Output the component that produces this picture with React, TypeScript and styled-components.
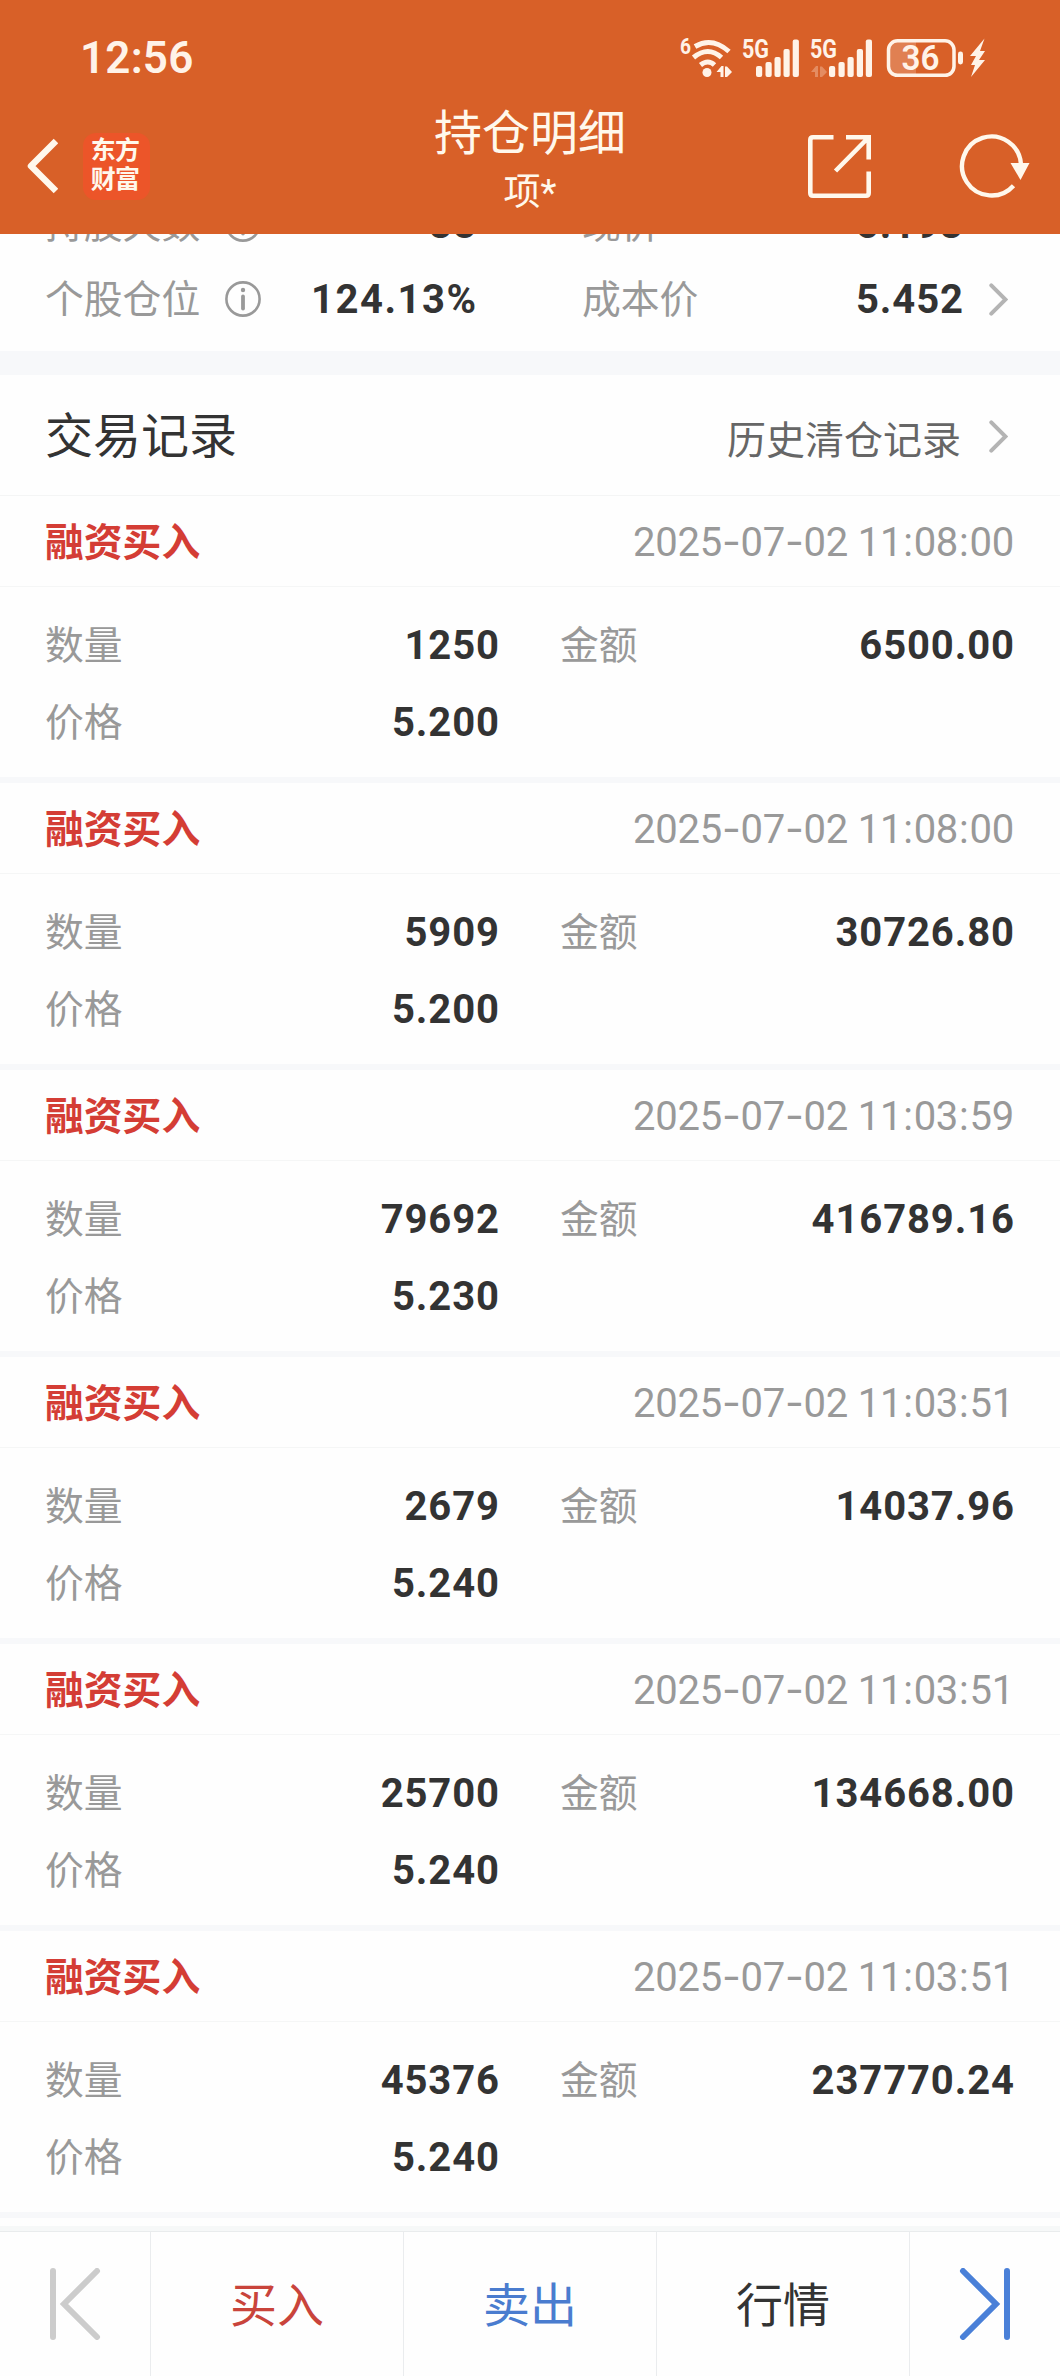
import React from "react";
import styled, { createGlobalStyle } from "styled-components";

const CJK = `Roboto, "Noto Sans CJK SC", sans-serif`;

const Global = createGlobalStyle`
  html, body { margin: 0; padding: 0; background: #fefefe; }
  * { box-sizing: border-box; }
`;

const Screen = styled.div`
  width: 1060px;
  height: 2376px;
  display: flex;
  flex-direction: column;
  overflow: hidden;
  background: #fefefe;
  font-family: ${CJK};
  color: #333;
`;

const Header = styled.header`
  flex: none;
  height: 234px;
  background: #d86028;
  color: #fff8ec;
  display: flex;
  flex-direction: column;
`;

const StatusBar = styled.div`
  height: 100px;
  padding: 16px 70px 0 80px;
  display: flex;
  align-items: center;
  justify-content: space-between;
`;

const Clock = styled.span`
  font-size: 44px;
  font-weight: 600;
  letter-spacing: 0.2px;
  line-height: 60px;
  color: #fff3e8;
`;

const NavBar = styled.div`
  height: 134px;
  display: grid;
  grid-template-columns: 400px 260px 400px;
`;

const NavLeft = styled.div`
  display: flex;
  align-items: center;
  padding: 0 0 2px 26px;
  gap: 25px;
`;

const Logo = styled.div`
  width: 67px;
  height: 67px;
  border-radius: 13px;
  background: #ec5529;
  display: flex;
  flex-direction: column;
  align-items: center;
  justify-content: center;
  padding: 0 3px 2px 0;
  font-size: 25px;
  font-weight: 700;
  line-height: 29px;
  letter-spacing: -0.8px;
`;

const NavTitle = styled.div`
  display: flex;
  flex-direction: column;
  align-items: center;
`;

const Title = styled.div`
  font-size: 48px;
  line-height: 60px;
  margin-top: 4px;
  white-space: nowrap;
`;

const Subtitle = styled.div`
  font-size: 37px;
  line-height: 50px;
  margin-top: 4px;
`;

const NavRight = styled.div`
  display: flex;
  align-items: center;
  justify-content: flex-end;
  gap: 87px;
  padding: 0 29px 2px 0;
`;

const Content = styled.main`
  flex: 1;
  min-height: 0;
  overflow: hidden;
`;

const Summary = styled.section`
  height: 117px;
  overflow: hidden;
  display: flex;
  flex-direction: column;
  justify-content: flex-end;
  padding-bottom: 14px;
`;

const SummaryRow = styled.div`
  flex: none;
  height: 75px;
  padding: 0 46px 0 45px;
  display: grid;
  grid-template-columns: 431px 106px 381px 1fr;
  align-items: center;
`;

const LabelGroup = styled.div`
  display: flex;
  align-items: center;
  gap: 25px;

  svg { margin-bottom: 2px; }
`;

const Label = styled.span`
  font-size: 38.8px;
  line-height: 56px;
  color: #999;
  white-space: nowrap;
`;

const Value = styled.span<{ $tracking?: number }>`
  font-size: 40px;
  line-height: 56px;
  font-weight: 700;
  letter-spacing: ${(p) => p.$tracking ?? 0.9}px;
  margin-right: -${(p) => p.$tracking ?? 0.9}px;
  color: #333;
  text-align: right;
`;

const Between = styled.div`
  display: flex;
  align-items: center;
  justify-content: space-between;
`;

const CostCell = styled(Between)`
  grid-column: 3 / 4;
`;

const ArrowCell = styled.div`
  display: flex;
  justify-content: flex-end;
  padding: 0 6px 0 0;
`;

const Gap = styled.div`
  height: 24px;
  background: #f7f8fa;
`;

const SectionHead = styled.div`
  height: 121px;
  border-bottom: 1px solid #f4f5f5;
  padding: 3px 52px 0 45px;
  display: flex;
  align-items: center;
  justify-content: space-between;
`;

const SectionTitle = styled.h2`
  margin: 0;
  font-size: 48px;
  font-weight: 400;
  line-height: 70px;
`;

const HistoryLink = styled.div`
  display: flex;
  align-items: center;
  gap: 28px;
  font-size: 39px;
  color: #666;
`;

const Record = styled.article`
  height: 287px;
  border-bottom: 6px solid #f7f8fa;
`;

const RecordHead = styled(Between)`
  height: 91px;
  padding: 0 46px 0 45px;
  border-bottom: 1px solid #f5f6f6;
`;

const Kind = styled.span`
  font-size: 38.8px;
  font-weight: 700;
  color: #d43d35;
  padding-bottom: 4px;
`;

const Stamp = styled.time`
  font-size: 40px;
  letter-spacing: -0.25px;
  color: #999;
  white-space: pre;
`;

const Sep = styled.span<{ $dash?: boolean }>`
  ${(p) => (p.$dash ? 'font-family: Inter, sans-serif; font-size: 41px;' : "padding: 0 1px;")}
`;

const RecordBody = styled.div`
  padding: 20px 46px 0 45px;
  display: grid;
  grid-template-columns: 454px 454px;
  column-gap: 61px;
  grid-auto-rows: 77px;
`;

const Foot = styled.div`
  flex: none;
  height: 150px;
  border-top: 5px solid #f6f8f8;
`;

const TabBar = styled.nav`
  height: 145px;
  border-top: 1px solid #e9eced;
  display: grid;
  grid-template-columns: 151px 253px 253px 253px 150px;
`;

const Tab = styled.div<{ $color?: string; $text?: boolean }>`
  display: flex;
  align-items: center;
  justify-content: center;
  font-size: 47px;
  padding-bottom: ${(p) => (p.$text ? "6px" : "0")};
  color: ${(p) => p.$color || "#333"};
  border-right: 1px solid #eaecee;
  &:last-child { border-right: 0; }
`;

const Chevron = () => (
  <svg width="19" height="33" viewBox="0 0 19 33" fill="none" stroke="#b4b4b4" strokeWidth="4" strokeLinecap="round">
    <path d="M2.3 2.3 16.5 16.5 2.3 30.7" />
  </svg>
);

const Info = () => (
  <svg width="36" height="36" viewBox="0 0 36 36" fill="none" stroke="#999" strokeWidth="2.6">
    <circle cx="18" cy="18" r="16.6" />
    <path d="M18 15.500v12" strokeWidth="3.8" strokeLinecap="round" />
    <circle cx="18" cy="9" r="2.2" fill="#999" stroke="none" />
  </svg>
);

const StatusIcons = () => (
  <svg width="310" height="44" viewBox="0 0 310 44" fill="none" stroke="#fff3e8" fontFamily="Roboto, sans-serif">
    <g fill="#fff3e8" stroke="none">
      <text x="0" y="17.500" fontSize="22" fontWeight="700" textLength="11" lengthAdjust="spacingAndGlyphs">6</text>
      <text x="62" y="21.500" fontSize="25" fontWeight="700" textLength="27" lengthAdjust="spacingAndGlyphs">5G</text>
      <text x="130" y="21.500" fontSize="25" fontWeight="700" textLength="27" lengthAdjust="spacingAndGlyphs">5G</text>
      <circle cx="27" cy="36.500" r="4.5" />
      <path d="M36.500 36l5-6h2v11h-3v-5zM45 30.500h2l5 5.500-5 5h-2z" />
      {[[76, 11], [85.5, 15], [94.5, 20], [103.5, 28], [112.7, 37.5]].map(([x, h]) => (
        <rect key={x} x={x} y={41 - h} width="6.2" height={h} rx="2" />
      ))}
      {[[149, 11], [158.5, 15], [167.5, 20], [176.8, 28], [185.8, 37.5]].map(([x, h]) => (
        <rect key={x} x={x} y={41 - h} width="6.2" height={h} rx="2" />
      ))}
      <path d="M131 36l5-6h2v11h-3v-5zM140 30.500h2l5 5.500-5 5h-2z" opacity=".3" />
      <path d="M213 6h23v33h-23q-6-1-6-8V14q0-7 6-8z" opacity=".22" />
      <rect x="278" y="15.500" width="5" height="13" rx="2.400" />
      <path d="M304.500 2.500 290 20h6l-5 9h4l-4 12 14-17h-6l6-9h-5z" />
      <text x="221.500" y="34" fontSize="34.500" fontWeight="600" textLength="38" lengthAdjust="spacingAndGlyphs">36</text>
    </g>
    <path d="M15 10.500q17-10 34 5M13.500 21.500q14.500-12 28 0M20.500 29q7.500-6 14 0" strokeWidth="5" />
    <rect x="208.500" y="4.800" width="65.500" height="34.500" rx="9" strokeWidth="3.500" />
  </svg>
);

const records = [
  ["2025-07-02 11:08:00", "1250", "6500.00", "5.200"],
  ["2025-07-02 11:08:00", "5909", "30726.80", "5.200"],
  ["2025-07-02 11:03:59", "79692", "416789.16", "5.230"],
  ["2025-07-02 11:03:51", "2679", "14037.96", "5.240"],
  ["2025-07-02 11:03:51", "25700", "134668.00", "5.240"],
  ["2025-07-02 11:03:51", "45376", "237770.24", "5.240"],
];

const DateText = ({ value }: { value: string }) => (
  <Stamp>
    {value.split(/([-:])/).map((part, i) =>
      part === "-" || part === ":" ? <Sep key={i} $dash={part === "-"}>{part}</Sep> : part
    )}
  </Stamp>
);

const Field = ({ label, value }: { label: string; value: string }) => (
  <Between>
    <Label>{label}</Label>
    <Value>{value}</Value>
  </Between>
);

type SummaryLineProps = {
  left: string;
  leftValue: string;
  right: string;
  rightValue: string;
  tracking?: number;
  arrow?: boolean;
};

const SummaryLine = ({ left, leftValue, right, rightValue, tracking, arrow }: SummaryLineProps) => (
  <SummaryRow>
    <Between>
      <LabelGroup>
        <Label>{left}</Label>
        <Info />
      </LabelGroup>
      <Value $tracking={tracking}>{leftValue}</Value>
    </Between>
    <CostCell>
      <Label>{right}</Label>
      <Value>{rightValue}</Value>
    </CostCell>
    <ArrowCell>{arrow && <Chevron />}</ArrowCell>
  </SummaryRow>
);

export default function App() {
  return (
    <>
      <Global />
      <Screen>
        <Header>
          <StatusBar>
            <Clock>12:56</Clock>
            <StatusIcons />
          </StatusBar>
          <NavBar>
            <NavLeft>
              <svg width="32" height="56" viewBox="0 0 32 56" fill="none" stroke="#fff8ec" strokeWidth="6.500">
                <path d="M30 3 5 28l25 25" strokeLinejoin="round" />
              </svg>
              <Logo>
                <span>东方</span>
                <span>财富</span>
              </Logo>
            </NavLeft>
            <NavTitle>
              <Title>持仓明细</Title>
              <Subtitle>项*</Subtitle>
            </NavTitle>
            <NavRight>
              <svg width="65" height="65" viewBox="0 0 65 65" fill="none" stroke="#fff8ec" strokeWidth="4.600">
                <path d="M26.500 3.300H6Q3.300 3.300 3.300 6v53q0 2.700 2.700 2.700h53q2.700 0 2.700-2.700V37.500" />
                <path d="M39 3.300h22.700V25.500M60.500 4.500 28.500 37" />
              </svg>
              <svg width="72" height="66" viewBox="0 0 72 66" fill="none" stroke="#fff8ec" strokeWidth="4.400">
                <path d="M62 31.500A29.500 29.500 0 1 0 54.500 52.700" />
                <path d="M51.500 30h19L61.500 47z" fill="#fff8ec" stroke="none" />
              </svg>
            </NavRight>
          </NavBar>
        </Header>
        <Content>
          <Summary>
            <SummaryLine left="持股天数" leftValue="38" right="现价" rightValue="5.193" />
            <SummaryLine left="个股仓位" leftValue="124.13%" right="成本价" rightValue="5.452" tracking={1.5} arrow />
          </Summary>
          <Gap />
          <SectionHead>
            <SectionTitle>交易记录</SectionTitle>
            <HistoryLink>
              历史清仓记录
              <Chevron />
            </HistoryLink>
          </SectionHead>
          {records.map(([time, qty, amount, price], i) => (
            <Record key={i}>
              <RecordHead>
                <Kind>融资买入</Kind>
                <DateText value={time} />
              </RecordHead>
              <RecordBody>
                <Field label="数量" value={qty} />
                <Field label="金额" value={amount} />
                <Field label="价格" value={price} />
              </RecordBody>
            </Record>
          ))}
        </Content>
        <Foot>
          <TabBar>
            <Tab>
              <svg width="52" height="72" viewBox="0 0 52 72" fill="none" stroke="#ccc" strokeWidth="6" strokeLinecap="round">
                <path d="M4 3v66M48 3 15 36l33 33" />
              </svg>
            </Tab>
            <Tab $text $color="#c9443b">买入</Tab>
            <Tab $text $color="#4a7ccf">卖出</Tab>
            <Tab $text>行情</Tab>
            <Tab>
              <svg width="52" height="72" viewBox="0 0 52 72" fill="none" stroke="#4a80d8" strokeWidth="6" strokeLinecap="round">
                <path d="M48 3v66M4 3l33 33L4 69" />
              </svg>
            </Tab>
          </TabBar>
        </Foot>
      </Screen>
    </>
  );
}
